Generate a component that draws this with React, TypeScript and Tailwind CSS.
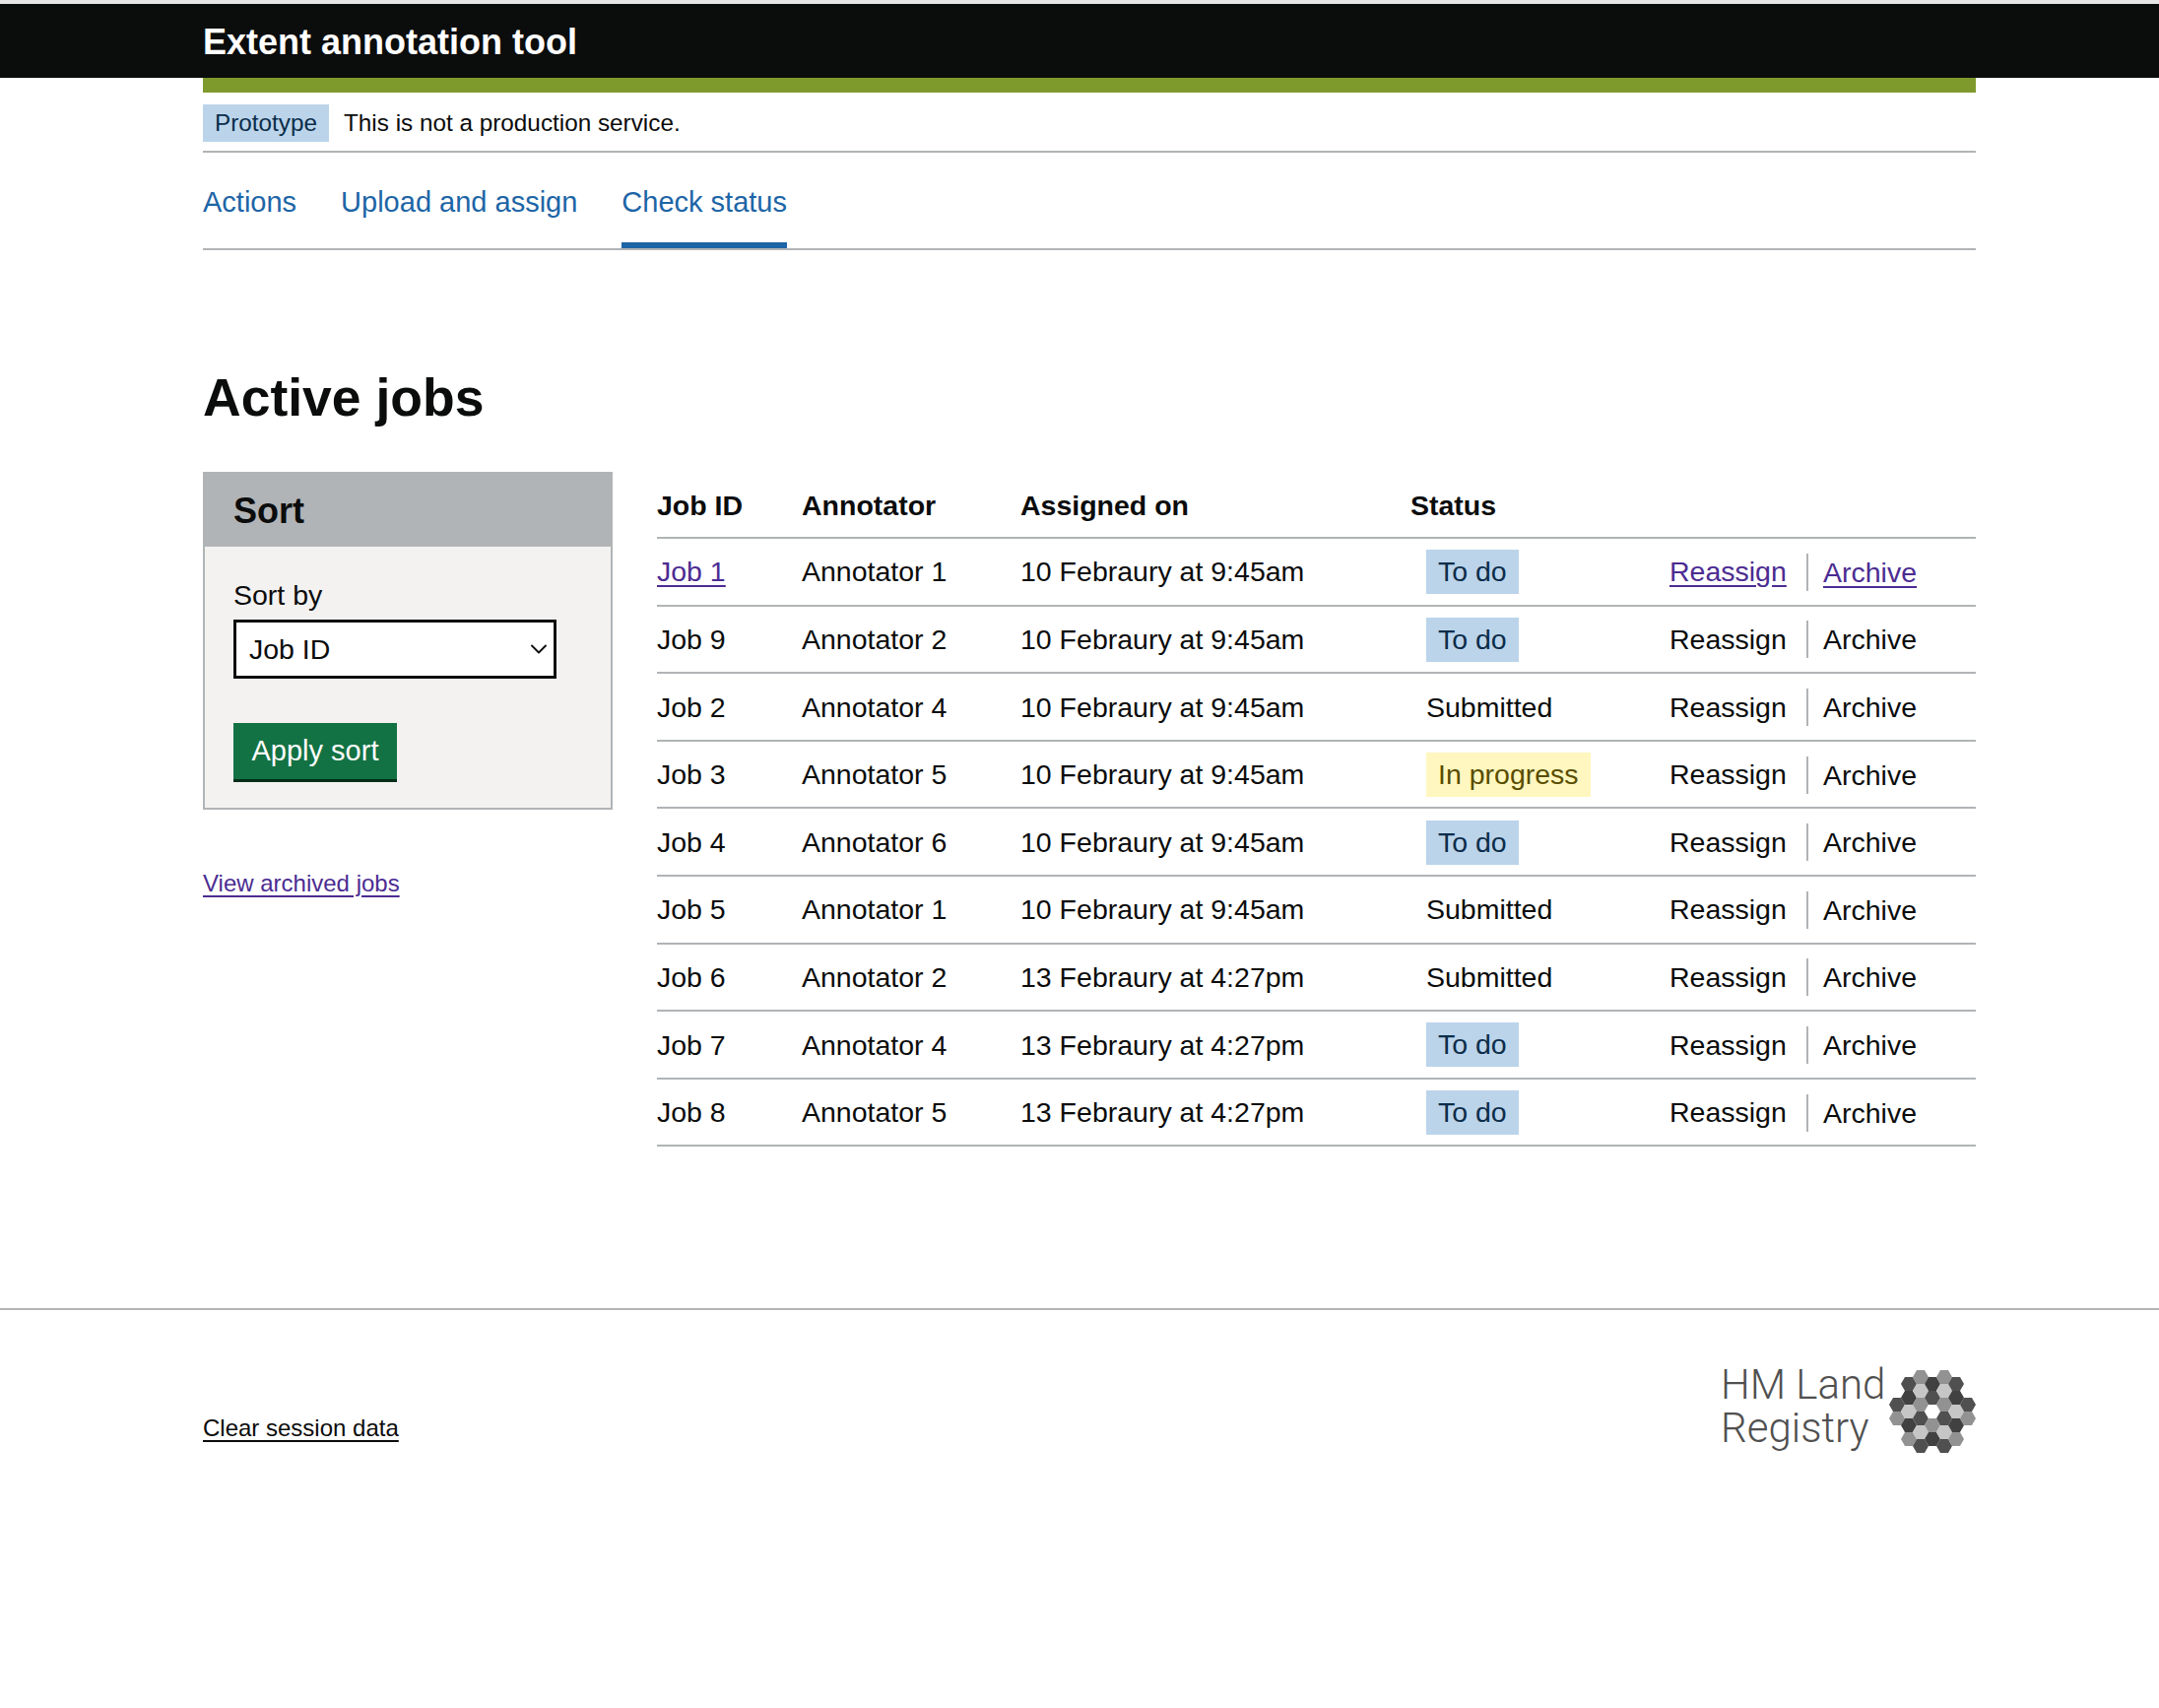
import { ChevronDown } from 'lucide-react';

type Job = { id: string; annotator: string; assigned: string; status: 'To do' | 'Submitted' | 'In progress' };

const jobs: Job[] = [
  { id: 'Job 1', annotator: 'Annotator 1', assigned: '10 Febraury at 9:45am', status: 'To do' },
  { id: 'Job 9', annotator: 'Annotator 2', assigned: '10 Febraury at 9:45am', status: 'To do' },
  { id: 'Job 2', annotator: 'Annotator 4', assigned: '10 Febraury at 9:45am', status: 'Submitted' },
  { id: 'Job 3', annotator: 'Annotator 5', assigned: '10 Febraury at 9:45am', status: 'In progress' },
  { id: 'Job 4', annotator: 'Annotator 6', assigned: '10 Febraury at 9:45am', status: 'To do' },
  { id: 'Job 5', annotator: 'Annotator 1', assigned: '10 Febraury at 9:45am', status: 'Submitted' },
  { id: 'Job 6', annotator: 'Annotator 2', assigned: '13 Febraury at 4:27pm', status: 'Submitted' },
  { id: 'Job 7', annotator: 'Annotator 4', assigned: '13 Febraury at 4:27pm', status: 'To do' },
  { id: 'Job 8', annotator: 'Annotator 5', assigned: '13 Febraury at 4:27pm', status: 'To do' },
];

const DARK = '#414141';
const MID = '#505050';
const GREY = '#929292';
const LIGHT = '#c6c6c6';

// x offset from the logo centre, y from the top of the column, fill
const hexes: [number, number, string][] = [
  [-36, 36, MID], [-36, 50, GREY],
  [-24, 15, MID], [-24, 29, DARK], [-24, 43, LIGHT], [-24, 57, DARK], [-24, 71, GREY],
  [-12, 8, GREY], [-12, 22, LIGHT], [-12, 36, GREY], [-12, 50, MID], [-12, 64, LIGHT], [-12, 78, MID],
  [0, 15, DARK], [0, 29, MID], [0, 43, '#ffffff'], [0, 57, GREY], [0, 71, DARK],
  [12, 8, GREY], [12, 22, LIGHT], [12, 36, GREY], [12, 50, MID], [12, 64, LIGHT], [12, 78, MID],
  [24, 15, MID], [24, 29, DARK], [24, 43, LIGHT], [24, 57, DARK], [24, 71, GREY],
  [36, 36, MID], [36, 50, GREY],
];

function LogoMark() {
  return (
    <svg width="88" height="86" viewBox="0 0 88 86">
      {hexes.map(([x, y, fill], i) => {
        const cx = 44 + x;
        const r = 8;
        const h = 7;
        return (
          <polygon
            key={i}
            fill={fill}
            points={`${cx - r},${y} ${cx - r / 2},${y - h} ${cx + r / 2},${y - h} ${cx + r},${y} ${cx + r / 2},${y + h} ${cx - r / 2},${y + h}`}
          />
        );
      })}
    </svg>
  );
}

function StatusTag({ status }: { status: Job['status'] }) {
  if (status === 'Submitted') return <span>Submitted</span>;
  if (status === 'In progress') {
    return <span className="inline-block h-[45px] px-3 leading-[45px] bg-[#fff7bf] text-[#594d00]">In progress</span>;
  }
  return <span className="inline-block h-[45px] px-3 leading-[45px] bg-[#bbd4ea] text-[#0c2d4a]">To do</span>;
}

export default function App() {
  return (
    <div className="min-h-[1734px] bg-white text-[#0b0c0c] font-['Liberation_Sans',Arial,sans-serif] text-[28.5px]">
      <div className="h-1 bg-[#e6e6e6]" />
      <header className="h-[75px] bg-[#0b0c0c] pl-[206px] pt-[2px] flex items-center">
        <span className="text-[36px] font-bold text-white">Extent annotation tool</span>
      </header>

      <div className="ml-[206px] w-[1800px]">
        <div className="h-[15px] bg-[#7f9a2c]" />
        <div className="h-[61px] pt-3 border-b-2 border-[#b1b4b6] flex items-start text-[24.3px]">
          <span className="h-[38px] leading-[38px] px-3 bg-[#bbd4ea] text-[#0c2d4a]">Prototype</span>
          <span className="ml-[15px] h-[38px] leading-[38px]">This is not a production service.</span>
        </div>

        <nav className="h-[99px] border-b-2 border-[#b1b4b6] flex gap-[45px] text-[29px] text-[#1d65a6]">
          <a className="h-full pt-[29px]">Actions</a>
          <a className="h-full pt-[29px]">Upload and assign</a>
          <a className="h-full pt-[29px] border-b-[6px] border-[#1d65a6]">Check status</a>
        </nav>

        <h1 className="mt-[115px] h-[70px] text-[53.5px] leading-[70px] font-bold">Active jobs</h1>

        <main className="mt-[40px] flex gap-[45px] items-start">
          <aside className="w-[416px] shrink-0">
            <div className="border-2 border-[#b1b4b6] bg-[#f3f2f1]">
              <div className="-mx-0.5 -mt-0.5 h-[76px] bg-[#b1b4b6] pl-[31px] pt-[3px] flex items-center">
                <h2 className="text-[36px] font-bold">Sort</h2>
              </div>
              <div className="pl-[29px] pt-[31px] pb-[26px]">
                <label className="block h-[43px] leading-[37px]">Sort by</label>
                <div className="relative w-[328px]">
                  <select className="block w-full h-[60px] appearance-none rounded-none border-[3.5px] border-[#0b0c0c] bg-white pl-[13px] text-[28.5px]">
                    <option>Job ID</option>
                  </select>
                  <ChevronDown className="absolute right-[4px] top-[16px] pointer-events-none" size={28} strokeWidth={1.6} />
                </div>
                <button className="mt-[45px] block w-[166px] h-[60px] bg-[#137244] border-b-[3px] border-[#002d18] text-white text-[29px]">
                  Apply sort
                </button>
              </div>
            </div>
            <a className="block mt-[57px] text-[24px] text-[#4c2c92] underline underline-offset-[4px]">View archived jobs</a>
          </aside>

          <table className="w-[1339px] table-fixed border-separate border-spacing-0 text-left">
            <colgroup>
              <col className="w-[147px]" />
              <col className="w-[222px]" />
              <col className="w-[396px]" />
              <col className="w-[263px]" />
              <col />
            </colgroup>
            <thead>
              <tr className="font-bold">
                <th className="h-[68px] pt-[2px] border-b-2 border-[#b1b4b6]">Job ID</th>
                <th className="h-[68px] pt-[2px] border-b-2 border-[#b1b4b6]">Annotator</th>
                <th className="h-[68px] pt-[2px] border-b-2 border-[#b1b4b6]">Assigned on</th>
                <th className="h-[68px] pt-[2px] border-b-2 border-[#b1b4b6]">Status</th>
                <th className="h-[68px] pt-[2px] border-b-2 border-[#b1b4b6]" />
              </tr>
            </thead>
            <tbody>
              {jobs.map((job, i) => (
                <tr key={job.id}>
                  <td className="h-[68.6px] pt-[1px] border-b-2 border-[#b1b4b6]">
                    {i === 0 ? <a className="text-[#4c2c92] underline underline-offset-[4px]">{job.id}</a> : job.id}
                  </td>
                  <td className="h-[68.6px] pt-[1px] border-b-2 border-[#b1b4b6]">{job.annotator}</td>
                  <td className="h-[68.6px] pt-[1px] border-b-2 border-[#b1b4b6]">{job.assigned}</td>
                  <td className="h-[68.6px] pt-[1px] border-b-2 border-[#b1b4b6] pl-4">
                    <StatusTag status={job.status} />
                  </td>
                  <td className="h-[68.6px] pt-[1px] border-b-2 border-[#b1b4b6]">
                    <div className="flex items-center">
                      <a className={i === 0 ? 'text-[#4c2c92] underline underline-offset-[4px] w-[139px]' : 'w-[139px]'}>Reassign</a>
                      <span className="pl-[15px] border-l-2 border-[#b1b4b6] h-[38px] leading-[38px]">
                        <a className={i === 0 ? 'text-[#4c2c92] underline underline-offset-[4px]' : ''}>Archive</a>
                      </span>
                    </div>
                  </td>
                </tr>
              ))}
            </tbody>
          </table>
        </main>
      </div>

      <footer className="mt-[164px] border-t-2 border-[#b1b4b6] pl-[206px]">
        <div className="w-[1800px] h-[160px] flex justify-between items-start">
          <a className="mt-[102px] text-[24px] underline underline-offset-[4px]">Clear session data</a>
          <div className="flex items-start">
            <div className="mt-[54px] w-[142px] text-[42px] leading-[44px] font-['Roboto',sans-serif] font-light text-[#505050] whitespace-nowrap">
              HM Land
              <br />
              Registry
            </div>
            <div className="ml-[29px] mt-[60px]">
              <LogoMark />
            </div>
          </div>
        </div>
      </footer>
    </div>
  );
}
